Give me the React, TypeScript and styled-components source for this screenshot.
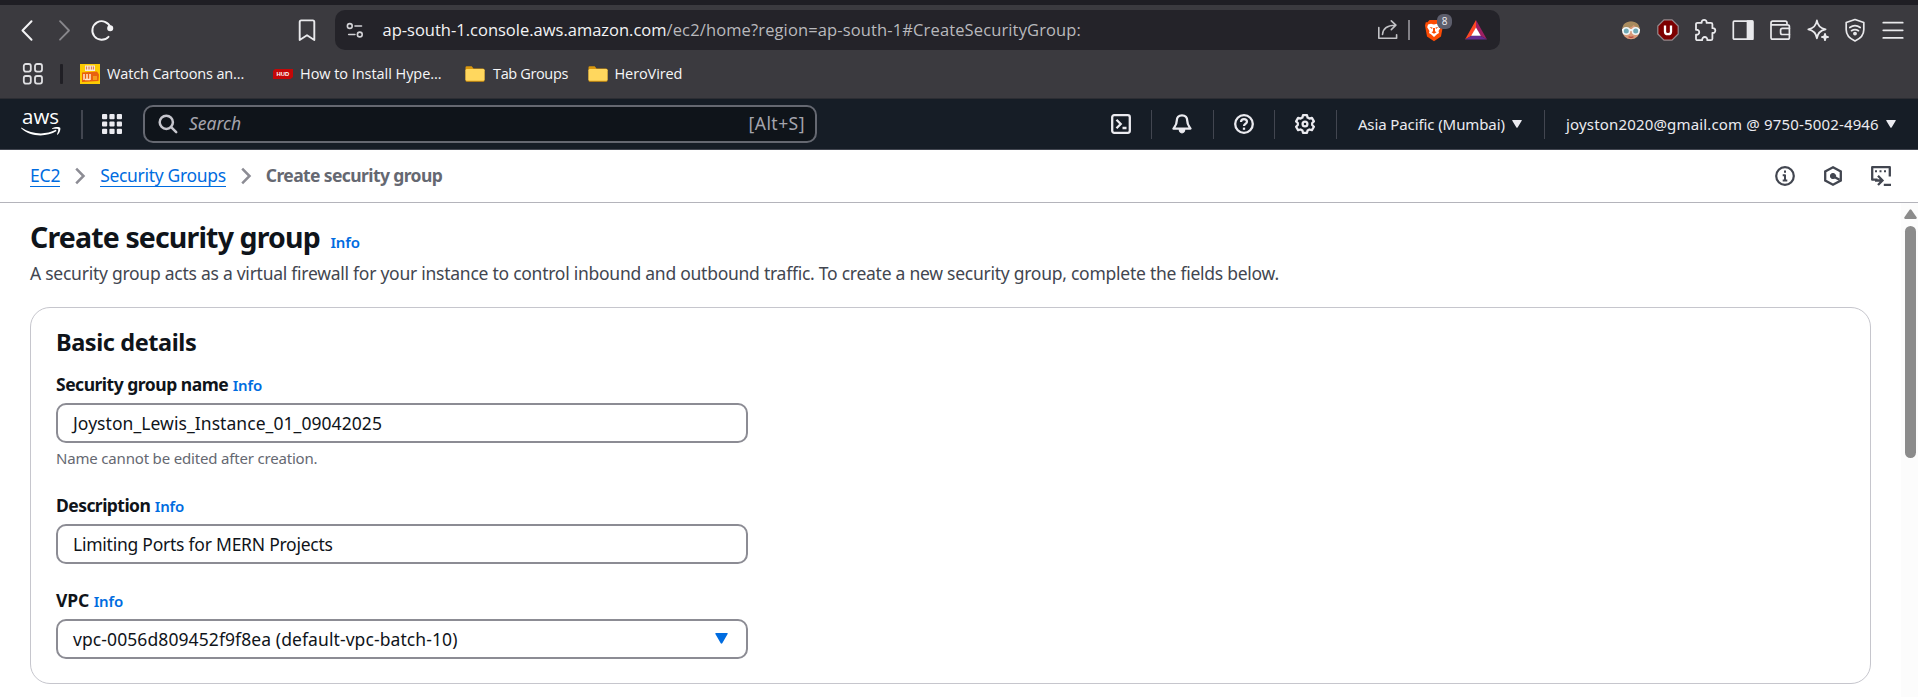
import React from 'react';
import styled, { createGlobalStyle } from 'styled-components';

const GlobalStyle = createGlobalStyle`
  * { box-sizing: border-box; }
  body { margin: 0; background: #fff; overflow: hidden; }
  svg { display: block; flex: none; }
`;

const chromeFont = '"Open Sans", "Noto Sans", sans-serif';
const consoleFont = '"Noto Sans", "Open Sans", sans-serif';

const Window = styled.div`
  width: 1918px;
  height: 697px;
  display: flex;
  flex-direction: column;
  font-family: ${consoleFont};
  color: #0f141a;
`;

/* ---------- browser chrome ---------- */

const Chrome = styled.header`
  height: 99px;
  flex: none;
  background: #3b3a3f;
  border-top: 5px solid #1f1e24;
  border-bottom: 1px solid #2c2d33;
  font-family: ${chromeFont};
`;

const Toolbar = styled.div`
  display: flex;
  align-items: center;
  height: 50px;
  padding: 0 13.5px 0 14.5px;
`;

const NavButtons = styled.div`
  display: flex;
  align-items: center;
  width: 280px;
  gap: 13.6px;
`;

const AddressBar = styled.div`
  display: flex;
  align-items: center;
  width: 1165px;
  height: 40px;
  margin-left: 16.5px;
  padding: 0 13px 0 9px;
  border-radius: 10px;
  background: #242329;
`;

const Url = styled.div`
  flex: 1;
  margin-left: 16.5px;
  padding-bottom: 1px;
  font-size: 16.5px;
  line-height: 24px;
  letter-spacing: 0.13px;
  white-space: nowrap;
  color: #b9b9bd;
`;

const Domain = styled.span`
  color: #f3f3f5;
  letter-spacing: 0;
`;

const BarDivider = styled.i`
  width: 2px;
  height: 20px;
  margin: 0 14px 0 8px;
  background: #828187;
`;

const ShieldButton = styled.div`
  position: relative;
  margin-right: 21px;
`;

const Badge = styled.span`
  position: absolute;
  top: -5px;
  right: -8px;
  width: 15px;
  height: 15px;
  border-radius: 6px;
  background: #5d5e6c;
  color: #f0f0f4;
  font-size: 10px;
  line-height: 15px;
  text-align: center;
`;

const Extensions = styled.div`
  display: flex;
  align-items: center;
  gap: 13.43px;
  margin-left: auto;
`;

const BookmarksBar = styled.div`
  display: flex;
  align-items: center;
  height: 38px;
  padding-left: 21.5px;
`;

const BookmarkDivider = styled.i`
  width: 3px;
  height: 20px;
  margin: 0 17px 0 16.5px;
  border-radius: 1px;
  background: #201f25;
`;

const Bookmark = styled.div<{ $gap: number; $width: number; $track: number }>`
  display: flex;
  align-items: center;
  gap: ${(p) => p.$gap}px;
  width: ${(p) => p.$width}px;
  font-size: 14.5px;
  line-height: 20px;
  letter-spacing: ${(p) => p.$track}px;
  white-space: nowrap;
  color: #f6f6f8;
  span { padding-bottom: 1px; }
`;

/* ---------- console navigation ---------- */

const ConsoleNav = styled.nav`
  display: flex;
  align-items: center;
  height: 51px;
  flex: none;
  padding-left: 21px;
  background: #161d26;
  border-bottom: 1px solid #424650;
  color: #ebebf0;
`;

const NavDivider = styled.i`
  width: 1px;
  height: 29px;
  background: #424650;
`;

const LogoDivider = styled(NavDivider)`
  width: 2px;
  margin: 0 19px 0 20px;
`;

const SearchBox = styled.div`
  display: flex;
  align-items: center;
  width: 675px;
  height: 38px;
  margin-left: 21px;
  padding: 0 10px 1px 13px;
  border: 2px solid #656871;
  border-radius: 10px;
  background: #0f141a;
  font-size: 17.5px;
  color: #a4a4ad;
`;

const SearchHint = styled.em`
  flex: 1;
  margin-left: 11px;
  padding-bottom: 1px;
`;

const Shortcut = styled.span`
  letter-spacing: 0.45px;
  padding-bottom: 1px;
`;

const NavIcons = styled.div`
  display: flex;
  align-items: center;
  margin-left: 294px;
`;

const NavSlot = styled.div<{ $w: number; $after?: number }>`
  display: flex;
  justify-content: center;
  width: ${(p) => p.$w}px;
  margin-right: ${(p) => p.$after ?? 0}px;
`;

const NavMenu = styled.div<{ $w: number; $track: number }>`
  display: flex;
  align-items: center;
  justify-content: space-between;
  width: ${(p) => p.$w}px;
  margin-left: 21px;
  margin-right: 22.5px;
  font-size: 15px;
  line-height: 20px;
  letter-spacing: ${(p) => p.$track}px;
  white-space: nowrap;
`;

/* ---------- breadcrumb ---------- */

const BreadcrumbBar = styled.div`
  display: flex;
  align-items: center;
  height: 53px;
  flex: none;
  padding: 0 25px 0 30px;
  border-bottom: 1px solid #b4b4bb;
  font-size: 17.5px;
`;

const Crumb = styled.a<{ $track: number }>`
  height: 22px;
  line-height: 20px;
  letter-spacing: ${(p) => p.$track}px;
  color: #006ce0;
  border-bottom: 1px solid #006ce0;
`;

const CurrentCrumb = styled.span`
  height: 22px;
  line-height: 20px;
  font-weight: 700;
  letter-spacing: -0.6px;
  color: #656871;
`;

const Separator = styled.svg`
  margin: 0 14px;
`;

const PanelTools = styled.div`
  display: flex;
  gap: 24px;
  margin-left: auto;
`;

/* ---------- page body ---------- */

const Body = styled.div`
  display: flex;
  flex: 1;
  min-height: 0;
`;

const Content = styled.main`
  width: 1871px;
  margin-right: 30px;
  padding: 16px 0 0 30px;
`;

const TitleRow = styled.div`
  display: flex;
  align-items: baseline;
  height: 36px;
  gap: 10.5px;
`;

const Title = styled.h1`
  margin: 0;
  font-size: 28.5px;
  line-height: 36px;
  font-weight: 700;
  letter-spacing: -0.85px;
`;

const InfoLink = styled.a`
  font-size: 15px;
  font-weight: 600;
  letter-spacing: -0.15px;
  color: #006ce0;
`;

const Lead = styled.p`
  margin: 6px 0 21px;
  font-size: 17.5px;
  line-height: 25px;
  letter-spacing: -0.257px;
  white-space: nowrap;
  color: #424650;
`;

const Card = styled.section`
  height: 377px;
  padding: 19px 25px 0;
  border: 1px solid #c6c6cd;
  border-radius: 20px;
`;

const CardTitle = styled.h2`
  margin: 0 0 15px;
  font-size: 23.5px;
  line-height: 30px;
  font-weight: 700;
  letter-spacing: -0.42px;
`;

const Field = styled.div`
  width: 692px;
  margin-bottom: 24px;
`;

const LabelRow = styled.div<{ $gap: number }>`
  display: flex;
  align-items: baseline;
  gap: ${(p) => p.$gap}px;
  height: 25px;
  margin-bottom: 6px;
  line-height: 25px;
`;

const Label = styled.label<{ $track: number }>`
  font-size: 17.5px;
  font-weight: 700;
  letter-spacing: ${(p) => p.$track}px;
`;

const Control = styled.div<{ $track: number }>`
  display: flex;
  align-items: center;
  justify-content: space-between;
  height: 40px;
  padding: 0 18px 1px 15px;
  border: 2px solid #8c8c94;
  border-radius: 10px;
  font-size: 17.5px;
  letter-spacing: ${(p) => p.$track}px;
`;

const Constraint = styled.div`
  height: 22px;
  margin-top: 4px;
  font-size: 15px;
  line-height: 22px;
  letter-spacing: -0.18px;
  color: #656871;
`;

const Scrollbar = styled.div`
  display: flex;
  flex-direction: column;
  align-items: center;
  width: 17px;
  padding: 6px 0 0 2px;
  background: #fcfcfc;
`;

const Thumb = styled.i`
  width: 11px;
  height: 232px;
  margin-top: 7px;
  border-radius: 6px;
  background: #8b8b8b;
`;

/* ---------- icons ---------- */

type IconProps = { children: React.ReactNode; w?: number; h?: number; stroke?: string; sw?: number };
const Icon = ({ children, w = 24, h = 24, stroke = '#e9e9ec', sw = 1.7 }: IconProps) => (
  <svg width={w} height={h} viewBox={`0 0 ${w} ${h}`} fill="none" stroke={stroke} strokeWidth={sw} strokeLinejoin="round" strokeLinecap="round">
    {children}
  </svg>
);

const BackIcon = () => <Icon sw={2} stroke="#f3f3f5"><path d="M16.5 3.2 7.5 12.5l9 9.2" /></Icon>;
const ForwardIcon = () => <Icon sw={1.8} stroke="#88878c"><path d="M8 3.2l9 9.3-9 9.2" /></Icon>;
const ReloadIcon = () => (
  <Icon sw={1.9} stroke="#f3f3f5">
    <path d="M20.4 9.3A9.3 9.3 0 1 0 18.5 18.8" />
    <circle cx="20.2" cy="10.2" r="2.1" fill="#f3f3f5" />
  </Icon>
);
const BookmarkIcon = () => <Icon sw={1.9}><path d="M6.2 2.4h11.600q1.500 0 1.500 1.600v18L12 17.200 4.700 22V4q0-1.600 1.500-1.600z" /></Icon>;
const SiteIcon = () => (
  <Icon w={22} h={22} stroke="#d2d2d6" sw={1.6}>
    <circle cx="5.800" cy="7" r="2.400" /><path d="M11 7h6.500" />
    <circle cx="15.800" cy="15.500" r="2.400" /><path d="M4.700 15.500h6.200" />
  </Icon>
);
const ShareIcon = () => (
  <Icon stroke="#c2c2c6" sw={1.6}>
    <path d="M2.800 9.500v10.800h17.800v-3.500" />
    <path d="M6.500 16.500c.4-6 4-9.300 12.800-9.300M15.300 2.800l4.600 4.400-4.600 4.400" />
  </Icon>
);
const BraveIcon = () => (
  <svg width="20" height="23" viewBox="0 0 20 23">
    <path d="M5.500 1h9l2 2.200 1.700.1L19 6.500l-2 11L10 22.300 3 17.500 1 6.500l.8-3.200 1.700-.1z" fill="#fb4b05" />
    <path d="M4 5.500l3-.8 3 .9 3-.9 3 .8.800 2.700-2.300 3.800.5 2-2 1.200L10 18l-3-2.800-2-1.200.5-2-2.300-3.800z" fill="#fff" />
    <path d="M5.500 8l3 .6-.5 1.400zM14.500 8l-3 .6.500 1.400zM9 9h2v3.200l1.500 1L10 14.800l-2.500-1.600 1.500-1z" fill="#fb4b05" />
  </svg>
);
const BatIcon = () => (
  <svg width="22" height="20" viewBox="0 0 22 20">
    <path d="M11 0 0 19.500l7-4L11 8z" fill="#ff4724" />
    <path d="M11 0l11 19.500-7-4L11 8z" fill="#9e1f63" />
    <path d="M0 19.500h22l-7-4H7z" fill="#662d91" />
    <path d="M11 7.500l4.800 8.300H6.200z" fill="#fff" />
  </svg>
);
const FaceIcon = () => (
  <svg width="24" height="24" viewBox="0 0 24 24">
    <circle cx="12" cy="12.500" r="8.800" fill="#d99a78" />
    <path d="M3.300 11C3.500 5.800 7.500 3.500 12 3.500s8.500 2.300 8.700 7.500c-3-1.500-4.700-2.500-6-4-2 2.500-6 4-11.400 4z" fill="#a98b5e" />
    <path d="M3 12h18" stroke="#f2f5f6" strokeWidth="2" />
    <circle cx="7.300" cy="13" r="3.300" fill="#6fa9b5" stroke="#f2f5f6" strokeWidth="1.600" />
    <circle cx="16.700" cy="13" r="3.300" fill="#6fa9b5" stroke="#f2f5f6" strokeWidth="1.600" />
    <path d="M9.500 18.800q2.500 1 5 0" stroke="#b5443c" strokeWidth="1.200" fill="none" />
  </svg>
);
const BlockerIcon = () => (
  <svg width="24" height="24" viewBox="0 0 24 24">
    <path d="M8 1.800h8l6.200 6.200v8L16 22.200H8L1.800 16V8z" fill="#7d0000" stroke="#938c90" strokeWidth="1.200" />
    <path d="M9 7.500v6.200q0 2.500 3 2.500t3-2.500V7.500" fill="none" stroke="#fff" strokeWidth="2.300" />
  </svg>
);
const PuzzleIcon = () => (
  <Icon sw={1.8}>
    <path d="M4.500 4.800h4.200C8 .9 14.300.9 13.600 4.800h4.300q1.500 0 1.500 1.500v3.900c3.900-.7 3.900 5.400 0 4.700v5.800q0 1.500-1.500 1.500h-3.600c.6-4.300-5.700-4.300-5.100 0H4.500Q3 22.200 3 20.700v-4c4.300.6 4.300-5.500 0-4.900V6.300q0-1.500 1.500-1.500z" />
  </Icon>
);
const SidebarIcon = () => (
  <Icon sw={1.7}>
    <rect x="2.300" y="3.200" width="19.400" height="18" rx="1" />
    <path d="M16.500 3.200h5.200v18h-5.200z" fill="#e9e9ec" />
  </Icon>
);
const WalletIcon = () => (
  <Icon sw={1.7}>
    <path d="M3 6.800V19.500q0 1.700 1.700 1.700h15q1.700 0 1.700-1.700V8.500q0-1.700-1.700-1.700zM3 6.800V5q0-1.800 1.800-1.800h12.500q1.700 0 1.700 1.800v1.800" />
    <path d="M21.400 10.300h-7q-1.800 0-1.800 1.800v2.600q0 1.800 1.800 1.800h7" />
  </Icon>
);
const SparkleIcon = () => (
  <Icon sw={1.7}>
    <path d="M10.900 2.300c.8 5.600 3.300 8.100 8.700 9-5.400.9-7.900 3.500-8.700 9.100-.8-5.600-3.300-8.200-8.600-9.100 5.300-.9 7.800-3.400 8.600-9z" />
    <path d="M19 15.800l.7 2.500 2.500.7-2.500.7-.7 2.500-.7-2.500-2.500-.7 2.500-.7z" fill="#e9e9ec" />
  </Icon>
);
const VpnIcon = () => (
  <Icon sw={1.7}>
    <path d="M12 1.500l8.800 3v7.300c0 5-3.300 8.800-8.800 11.200-5.500-2.400-8.800-6.200-8.800-11.200V4.500z" />
    <path d="M6.800 9.500q5.200-3.700 10.400 0M8.500 12.700q3.500-2.300 7 0" />
    <circle cx="12" cy="15.600" r="1.100" fill="#e9e9ec" />
  </Icon>
);
const MenuIcon = () => <Icon sw={1.8}><path d="M2.300 4.700h19.400M2.300 12.300h19.400M2.300 19.900h19.400" /></Icon>;

const BookmarkAppsIcon = () => (
  <Icon w={22} h={22} stroke="#e0e0e3" sw={1.8}>
    <rect x="1.800" y="1" width="7" height="7.600" rx="2" /><rect x="13" y="1" width="7" height="7.600" rx="2" />
    <rect x="1.800" y="13" width="7" height="7.600" rx="2" /><rect x="13" y="13" width="7" height="7.600" rx="2" />
  </Icon>
);
const CartoonFavicon = () => (
  <svg width="20" height="20" viewBox="0 0 20 20">
    <path d="M0 0h20v20H0z" fill="#fdcb03" />
    <path d="M5 1.500h10v5.500H5z" fill="#f6eadc" />
    <path d="M6.500 2.500v3M9 2.500v3M11.500 2.500v3M13.500 2.500v3" stroke="#e27d52" strokeWidth="1.200" />
    <path d="M2 8.500l15-1 2 3-.5 6.500L2 18z" fill="#e8610f" />
    <path d="M4 10v6M7 10v6M10 10v6M5 15.500h5" stroke="#ffe9d0" strokeWidth="1.500" />
    <path d="M13 12h4v4h-4z" fill="#f59a1c" />
  </svg>
);
const HudFavicon = () => (
  <svg width="20" height="20" viewBox="0 0 20 20">
    <path d="M2 5h18v8l-2.500 2H0V7z" fill="#c40707" />
    <text x="3.600" y="12.300" fontFamily="Liberation Sans, sans-serif" fontSize="6" fontWeight="700" fill="#fff" textLength="12.500" lengthAdjust="spacingAndGlyphs">HUD</text>
  </svg>
);
const FolderIcon = () => (
  <svg width="20" height="16" viewBox="0 0 20 16">
    <path d="M.5 1.500Q.5.300 1.700.300h5l1.800 2.200H18q1.500 0 1.500 1.500v10.500Q19.500 15.700 18 15.700H2Q.5 15.700.5 14.200z" fill="#d9970d" />
    <path d="M.5 4.300Q.5 3 2 3h16q1.500 0 1.500 1.300v9.200q0 1.300-1.500 1.300H2q-1.500 0-1.500-1.300z" fill="#ffd75e" />
  </svg>
);

const AwsLogo = () => (
  <svg width="40" height="46" viewBox="0 -10 40 46" fill="#fff">
    <text x="1" y="13.300" fontFamily="Open Sans, sans-serif" fontSize="20.500" fontWeight="500" textLength="37" lengthAdjust="spacingAndGlyphs">aws</text>
    <path d="M.3 16.400c11 7.200 24 7.800 34.500 2.400l.8 1.200C25 26.500 9.500 26 .1 17.200z" />
    <path d="M31 17.400c3-1.900 7.500-1.700 8.200-.7.600 1-.2 5-2.700 7.100l-.6-.3c1-2.300 1.700-4.700 1.300-5.300-.5-.7-3.500-.6-6.200-.3z" />
  </svg>
);
const ServicesIcon = () => (
  <svg width="20" height="20" viewBox="0 0 20 20" fill="#ebebf0">
    {[0, 7.4, 14.8].map((y) => [0, 7.4, 14.8].map((x) => <rect key={`${x}-${y}`} x={x} y={y} width="5.2" height="5.2" rx="1" />))}
  </svg>
);
const SearchIcon = () => <Icon w={20} h={20} stroke="#c6c6cd" sw={2.5}><circle cx="8.300" cy="8.300" r="6.600" /><path d="M13.200 13.200l5 5" /></Icon>;
const ShellIcon = () => (
  <Icon w={20} h={20} stroke="#ebebf0" sw={2.3}>
    <rect x="1.200" y="1.200" width="17.600" height="17.600" rx="2" />
    <path d="M5.500 5.800l4.200 4.200-4.200 4.200M11.500 14h4" strokeLinecap="butt" strokeLinejoin="miter" />
  </Icon>
);
const BellIcon = () => (
  <Icon w={20} h={20} stroke="#ebebf0" sw={2.3}>
    <path d="M10 1.300c-3.400 0-5.200 2.400-5.200 5.300 0 4-1.200 5-3.300 8h17c-2.100-3-3.300-4-3.300-8 0-2.900-1.800-5.300-5.200-5.300z" />
    <path d="M7.200 15.500h5.600q-.4 3.300-2.800 3.300t-2.800-3.300z" fill="#ebebf0" strokeWidth="1.200" />
  </Icon>
);
const HelpIcon = () => (
  <Icon w={20} h={20} stroke="#ebebf0" sw={2.3}>
    <circle cx="10" cy="10" r="8.800" />
    <path d="M7 8q.1-2.900 3-2.900t3 2.600c0 2.100-3 2-3 4.300" strokeLinecap="butt" strokeWidth="2.200" />
    <path d="M10 13.600v2.200" strokeLinecap="butt" strokeWidth="2.300" />
  </Icon>
);
const GearIcon = () => (
  <Icon w={20} h={20} stroke="#ebebf0" sw={2.3}>
    <path d="M8 1.200h4l.6 2.400 1.800 1 2.500-.7 2 3.500L17.200 9v2l1.700 1.700-2 3.500-2.500-.7-1.800 1-.6 2.300H8l-.6-2.300-1.800-1-2.500.7-2-3.500L2.800 11V9L1.100 7.400l2-3.500 2.500.7 1.800-1z" />
    <circle cx="10" cy="10" r="2.400" />
  </Icon>
);
const Caret = ({ fill, w = 10, h = 8 }: { fill: string; w?: number; h?: number }) => (
  <svg width={w} height={h} viewBox="0 0 10 8" preserveAspectRatio="none" fill={fill}>
    <path d="M.7 0h8.600q.9 0 .4.800L5.600 7.500q-.6.700-1.200 0L.3.800Q-.1 0 .7 0z" />
  </svg>
);
const InfoIcon = () => (
  <Icon stroke="#424650" sw={2.2}>
    <circle cx="12" cy="12" r="8.800" />
    <path d="M12 6.500v2.300M9.700 11.200H12v5.300M9.700 16.400h4.600" strokeLinecap="butt" strokeWidth="2" />
  </Icon>
);
const HexIcon = () => (
  <Icon stroke="#424650" sw={2.3}>
    <path d="M12 3.200l7.800 4.300v9L12 20.800l-7.800-4.300v-9z" strokeLinejoin="miter" />
    <circle cx="12" cy="12" r="2.600" fill="#424650" strokeWidth="1" />
    <path d="M12.500 12.500l6 3.300" strokeLinecap="butt" />
  </Icon>
);
const DockIcon = () => (
  <Icon stroke="#424650" sw={2.3}>
    <path d="M20.800 12.500V3.200H3.200v12.500h5.300" strokeLinecap="butt" />
    <path d="M6 7.300h2M10.500 7.300h2M15 7.300h2" strokeLinecap="butt" strokeWidth="2" />
    <path d="M6 16.500h6.500M9 11.800l4.500 4.700L9 21M14.800 20.900H22" strokeLinecap="butt" strokeLinejoin="miter" />
  </Icon>
);
const Chevron = () => (
  <Separator width="12" height="18" viewBox="0 0 12 18" fill="none" stroke="#8c8c94" strokeWidth="2.500">
    <path d="M2.200 1.600L9.500 9l-7.300 7.400" />
  </Separator>
);

export default function App() {
  return (
    <Window>
      <GlobalStyle />
      <Chrome>
        <Toolbar>
          <NavButtons><BackIcon /><ForwardIcon /><ReloadIcon /></NavButtons>
          <BookmarkIcon />
          <AddressBar>
            <SiteIcon />
            <Url><Domain>ap-south-1.console.aws.amazon.com</Domain>/ec2/home?region=ap-south-1#CreateSecurityGroup:</Url>
            <ShareIcon />
            <BarDivider />
            <ShieldButton><BraveIcon /><Badge>8</Badge></ShieldButton>
            <BatIcon />
          </AddressBar>
          <Extensions>
            <FaceIcon /><BlockerIcon /><PuzzleIcon /><SidebarIcon />
            <WalletIcon /><SparkleIcon /><VpnIcon /><MenuIcon />
          </Extensions>
        </Toolbar>
        <BookmarksBar>
          <BookmarkAppsIcon />
          <BookmarkDivider />
          <Bookmark $gap={7} $width={193} $track={-0.14}><CartoonFavicon /><span>Watch Cartoons an...</span></Bookmark>
          <Bookmark $gap={7} $width={192} $track={-0.05}><HudFavicon /><span>How to Install Hype...</span></Bookmark>
          <Bookmark $gap={8} $width={123} $track={-0.36}><FolderIcon /><span>Tab Groups</span></Bookmark>
          <Bookmark $gap={6.5} $width={100} $track={-0.1}><FolderIcon /><span>HeroVired</span></Bookmark>
        </BookmarksBar>
      </Chrome>

      <ConsoleNav>
        <AwsLogo />
        <LogoDivider />
        <ServicesIcon />
        <SearchBox>
          <SearchIcon />
          <SearchHint>Search</SearchHint>
          <Shortcut>[Alt+S]</Shortcut>
        </SearchBox>
        <NavIcons>
          <NavSlot $w={20} $after={20}><ShellIcon /></NavSlot>
          <NavDivider />
          <NavSlot $w={61}><BellIcon /></NavSlot>
          <NavDivider />
          <NavSlot $w={60}><HelpIcon /></NavSlot>
          <NavDivider />
          <NavSlot $w={61}><GearIcon /></NavSlot>
          <NavDivider />
        </NavIcons>
        <NavMenu $w={164} $track={-0.1}>Asia Pacific (Mumbai)<Caret fill="#ebebf0" /></NavMenu>
        <NavDivider />
        <NavMenu $w={330} $track={0.16}>joyston2020@gmail.com @ 9750-5002-4946<Caret fill="#ebebf0" /></NavMenu>
      </ConsoleNav>

      <BreadcrumbBar>
        <Crumb $track={-0.2}>EC2</Crumb>
        <Chevron />
        <Crumb $track={-0.32}>Security Groups</Crumb>
        <Chevron />
        <CurrentCrumb>Create security group</CurrentCrumb>
        <PanelTools><InfoIcon /><HexIcon /><DockIcon /></PanelTools>
      </BreadcrumbBar>

      <Body>
        <Content>
          <TitleRow><Title>Create security group</Title><InfoLink>Info</InfoLink></TitleRow>
          <Lead>A security group acts as a virtual firewall for your instance to control inbound and outbound traffic. To create a new security group, complete the fields below.</Lead>
          <Card>
            <CardTitle>Basic details</CardTitle>
            <Field>
              <LabelRow $gap={4.5}><Label $track={-0.49}>Security group name</Label><InfoLink>Info</InfoLink></LabelRow>
              <Control $track={0.06}>Joyston_Lewis_Instance_01_09042025</Control>
              <Constraint>Name cannot be edited after creation.</Constraint>
            </Field>
            <Field>
              <LabelRow $gap={4.5}><Label $track={-0.55}>Description</Label><InfoLink>Info</InfoLink></LabelRow>
              <Control $track={-0.24}>Limiting Ports for MERN Projects</Control>
            </Field>
            <Field>
              <LabelRow $gap={4.5}><Label $track={-0.1}>VPC</Label><InfoLink>Info</InfoLink></LabelRow>
              <Control $track={0.09}>vpc-0056d809452f9f8ea (default-vpc-batch-10)<Caret fill="#006ce0" w={13} h={11} /></Control>
            </Field>
          </Card>
        </Content>
        <Scrollbar>
          <svg width="13" height="10" viewBox="0 0 13 10" fill="#8b8b8b"><path d="M5.600.700q.900-1 1.800 0l5.200 7.500q.700 1.700-.8 1.700H1.200Q-.300 9.900.4 8.200z" /></svg>
          <Thumb />
        </Scrollbar>
      </Body>
    </Window>
  );
}
